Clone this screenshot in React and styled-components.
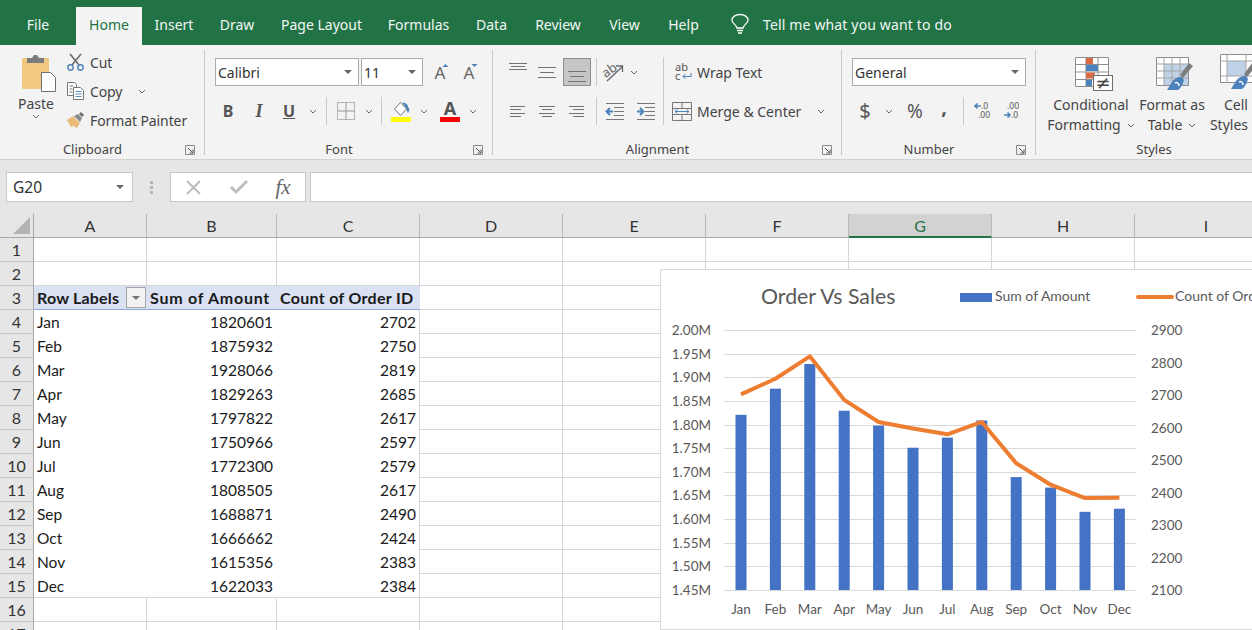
import * as React from 'react'
import styled, { createGlobalStyle } from 'styled-components'

const UI_FONT = '"Noto Sans", "Open Sans", sans-serif'
const CELL_FONT = 'Lato, "Open Sans", sans-serif'
const GREEN = '#217346'
const GRID = '#d6d6d6'

const GlobalStyle = createGlobalStyle`
    html, body {
        margin: 0;
        width: 1252px;
        height: 630px;
        overflow: hidden;
        background: #fff;
    }
    svg {
        overflow: visible;
    }
`

const Page = styled.div`
    width: 1252px;
    height: 630px;
    overflow: hidden;
    font-family: ${UI_FONT};
    color: #444;
`

/* tabs */
const TabBar = styled.div`
    display: flex;
    align-items: flex-end;
    height: 45px;
    background: ${GREEN};
`

const Tab = styled.div`
    width: ${p => p.$w}px;
    height: 38px;
    display: flex;
    align-items: center;
    justify-content: center;
    font-size: 14px;
    padding-bottom: 3px;
    box-sizing: border-box;
    color: ${p => (p.$active ? GREEN : '#f1f6f3')};
    background: ${p => (p.$active ? '#f3f3f3' : 'transparent')};
`

const TellMe = styled.div`
    display: flex;
    align-items: center;
    gap: 14px;
    height: 38px;
    padding: 0 0 3px 18px;
    box-sizing: border-box;
    font-size: 14px;
    letter-spacing: 0.15px;
    color: #f1f6f3;
    white-space: nowrap;
`

/* ribbon */
const Ribbon = styled.div`
    display: flex;
    height: 115px;
    box-sizing: border-box;
    padding-top: 5px;
    background: #f3f3f3;
    border-bottom: 1px solid #d2d2d2;
`

const Group = styled.section`
    flex: none;
    width: ${p => p.$w}px;
    height: 105px;
    box-sizing: border-box;
    display: flex;
    flex-direction: column;
    border-right: ${p => (p.$last ? 'none' : '1px solid #c8c8c8')};
`

const GroupBody = styled.div`
    flex: 1;
    min-height: 0;
    display: flex;
    padding-left: ${p => p.$pad || 0}px;
`

const GroupFoot = styled.div`
    display: flex;
    align-items: center;
    height: 17px;
    margin-bottom: -3px;
`

const GroupLabel = styled.div`
    flex: 1;
    text-align: center;
    font-size: 13px;
    line-height: 17px;
    color: #444;
`

const Launcher = styled.div`
    flex: none;
    width: 19px;
    display: flex;
    justify-content: flex-start;
`

const PasteBlock = styled.div`
    flex: none;
    width: 62px;
    margin-left: 5px;
    display: flex;
    flex-direction: column;
    align-items: center;
    padding-top: 4px;
    font-size: 14px;
    color: #444;
`

const PasteArt = styled.div`
    height: 38px;
    margin-left: 6px;
`

const PasteLabel = styled.div`
    line-height: 20px;
    margin-top: 2px;
`

const ClipList = styled.div`
    display: flex;
    flex-direction: column;
    gap: 5px;
`

const ClipRow = styled.div`
    display: flex;
    align-items: center;
    height: 24px;
    font-size: 14px;
    letter-spacing: -0.1px;
    white-space: nowrap;
`

const ClipIcon = styled.div`
    flex: none;
    width: 23px;
    display: flex;
    align-items: center;
`

const Rows = styled.div`
    display: flex;
    flex-direction: column;
    gap: 11px;
    padding-top: 8px;
`

const Row = styled.div`
    display: flex;
    align-items: center;
    height: 28px;
`

const Slot = styled.div`
    flex: none;
    width: ${p => p.$w}px;
    height: 100%;
    box-sizing: border-box;
    display: flex;
    align-items: center;
    justify-content: center;
`

const SelectedSlot = styled(Slot)`
    margin-left: 1px;
    background: #c6c6c6;
    border: 1px solid #8f8f8f;
`

const WideIcon = styled.div`
    flex: none;
    width: 33px;
    padding-right: 5px;
    box-sizing: border-box;
    display: flex;
    justify-content: flex-end;
`

const Glyph = styled.span`
    font-size: ${p => p.$size || 16}px;
    font-weight: ${p => (p.$bold ? 700 : 400)};
    font-style: ${p => (p.$italic ? 'italic' : 'normal')};
    text-decoration: ${p => (p.$under ? 'underline' : 'none')};
    font-family: ${p => (p.$serif ? '"Liberation Serif", serif' : UI_FONT)};
    color: ${p => p.$color || '#555'};
    line-height: 1;
    padding-bottom: ${p => p.$raise || 0}px;
`

const Divider = styled.div`
    flex: none;
    width: 1px;
    height: ${p => p.$h || 28}px;
    margin: 0 ${p => p.$mr || 0}px 0 ${p => p.$ml || 0}px;
    background: #c8c8c8;
`

const Combo = styled.div`
    flex: none;
    width: ${p => p.$w}px;
    height: 28px;
    box-sizing: border-box;
    margin-right: ${p => p.$mr || 0}px;
    padding: 0 6px 0 2px;
    display: flex;
    align-items: center;
    justify-content: space-between;
    background: #fff;
    border: 1px solid #ababab;
    font-size: 14px;
    color: #333;
`

const TallDivider = styled(Divider)`
    height: 68px;
    margin-top: 7px;
`

const WideRow = styled.div`
    display: flex;
    align-items: center;
    height: 28px;
    font-size: 14px;
    white-space: nowrap;
`

const RowText = styled.span`
    width: ${p => p.$w}px;
`

const StyleBtn = styled.div`
    flex: none;
    width: ${p => p.$w}px;
    display: flex;
    flex-direction: column;
    align-items: center;
    padding-top: ${p => p.$top || 7}px;
    font-size: 14px;
    white-space: nowrap;
`

const IconBox = styled.div`
    height: ${p => p.$h || 36}px;
    display: flex;
    justify-content: center;
    margin: 0 0 2px 5px;
`

const StyleLine = styled.div`
    display: flex;
    align-items: center;
    gap: 6px;
    line-height: 20px;
`

/* formula bar */
const FormulaBar = styled.div`
    display: flex;
    height: 54px;
    box-sizing: border-box;
    padding-top: 12px;
    background: #e6e6e6;
`

const NameBox = styled.div`
    flex: none;
    width: 127px;
    height: 30px;
    margin-left: 6px;
    box-sizing: border-box;
    padding: 0 8px 0 6px;
    display: flex;
    align-items: center;
    justify-content: space-between;
    background: #fff;
    border: 1px solid #c6c6c6;
    font-size: 15.5px;
    color: #333;
`

const Grip = styled.div`
    flex: none;
    width: 37px;
    height: 30px;
    display: flex;
    align-items: center;
    justify-content: center;
`

const FormulaButtons = styled.div`
    flex: none;
    width: 136px;
    height: 30px;
    box-sizing: border-box;
    display: flex;
    align-items: center;
    background: #fff;
    border: 1px solid #c6c6c6;
`

const FormulaInput = styled.div`
    flex: 1;
    height: 30px;
    margin-left: 4px;
    box-sizing: border-box;
    background: #fff;
    border: 1px solid #c6c6c6;
    border-right: none;
`

/* sheet */
const Sheet = styled.div`
    position: relative;
    display: grid;
    grid-template-columns: 34px 113px 130px 143px repeat(6, 143px);
    grid-auto-rows: 24px;
    font-family: ${CELL_FONT};
    font-size: 15.5px;
    color: #1a1a1a;
`

const Corner = styled.div`
    background: #e6e6e6;
    border-right: 1px solid #a8a8a8;
    border-bottom: 1px solid #a8a8a8;
    box-sizing: border-box;
    display: flex;
    align-items: flex-end;
    justify-content: flex-end;
    padding: 0 3px 3px 0;
`

const ColHead = styled.div`
    box-sizing: border-box;
    display: flex;
    align-items: center;
    justify-content: center;
    font-size: 16px;
    background: ${p => (p.$selected ? '#d2d2d2' : '#e6e6e6')};
    color: ${p => (p.$selected ? GREEN : '#333')};
    border-right: 1px solid #b8b8b8;
    border-bottom: ${p => (p.$selected ? `2px solid ${GREEN}` : '1px solid #a8a8a8')};
`

const RowHead = styled.div`
    box-sizing: border-box;
    display: flex;
    align-items: center;
    justify-content: center;
    font-size: 16px;
    background: #e6e6e6;
    color: #333;
    border-right: 1px solid #a8a8a8;
    border-bottom: 1px solid #c6c6c6;
`

const Cell = styled.div`
    box-sizing: border-box;
    display: flex;
    align-items: center;
    justify-content: ${p => (p.$right ? 'flex-end' : 'flex-start')};
    padding: 0 ${p => (p.$noRight ? 4 : 3)}px 0 3px;
    white-space: nowrap;
    min-width: 0;
    border-right: ${p => (p.$noRight ? 'none' : `1px solid ${GRID}`)};
    border-bottom: ${p => (p.$noBottom ? 'none' : `1px solid ${GRID}`)};
`

const PivotHead = styled.div`
    box-sizing: border-box;
    display: flex;
    align-items: center;
    justify-content: space-between;
    padding: 0 3px;
    font-size: 16px;
    font-weight: 700;
    letter-spacing: ${p => p.$track}px;
    white-space: nowrap;
    background: #d9e1f2;
    border-bottom: 1px solid #8ea9db;
`

const FilterBtn = styled.div`
    flex: none;
    width: 20px;
    height: 21px;
    box-sizing: border-box;
    margin-right: -2px;
    display: flex;
    align-items: center;
    justify-content: center;
    background: #f2f2f2;
    border: 1px solid #a6a6a6;
`

const ChartFrame = styled.div`
    position: absolute;
    left: 660px;
    top: 55px;
    width: 640px;
    height: 361px;
    box-sizing: border-box;
    background: #fff;
    border: 1px solid #d9d9d9;
    overflow: hidden;
`

const ChartSvg = styled.svg`
    display: block;
    font-family: ${CELL_FONT};
    fill: #595959;
`

/* small drawings */
const Chevron = ({ c = '#666' }) => (
    <svg width="8" height="5" viewBox="0 0 8 5"><path d="M1 1l3 3 3-3" fill="none" stroke={c} strokeWidth="1" /></svg>
)

const Caret = () => (
    <svg width="8" height="4" viewBox="0 0 8 4"><path d="M0 0h8L4 4z" fill="#666" /></svg>
)

const LauncherIcon = () => (
    <svg width="10" height="10" viewBox="0 0 10 10">
        <path d="M.5 9.500V.5h9v9z" fill="none" stroke="#8a8a8a" />
        <path d="M3 3l5 5M8 4.500V8H4.500" fill="none" stroke="#555" />
    </svg>
)

const PasteIcon = () => (
    <svg width="36" height="38" viewBox="0 0 36 38">
        <rect x="1" y="4" width="27" height="31" rx="1" fill="#f0c87f" />
        <path d="M6 9V4h5l2-3h3l2 3h5v5z" fill="#7b7b7b" />
        <path d="M20.500 18.500h9l5 5v14h-14z" fill="#fff" stroke="#6f6f6f" />
    </svg>
)

const ScissorsIcon = () => (
    <svg width="17" height="18" viewBox="0 0 17 18">
        <path d="M3 1l9 11M14 1L5 12" stroke="#6d6d6d" strokeWidth="1.600" fill="none" />
        <circle cx="3.500" cy="14.500" r="2.700" fill="none" stroke="#4d82b8" strokeWidth="1.400" />
        <circle cx="13.500" cy="14.500" r="2.700" fill="none" stroke="#4d82b8" strokeWidth="1.400" />
    </svg>
)

const CopyIcon = () => (
    <svg width="17" height="18" viewBox="0 0 17 18">
        <path d="M.5.5h7l2 2v11H.5z" fill="#fff" stroke="#777" />
        <path d="M6.500 5.500h7l3 3v9h-10z" fill="#fff" stroke="#777" />
        <path d="M2.500 4h4M2.500 7h3M2.500 10h3" stroke="#777" />
        <path d="M8.500 9.500h6M8.500 12h6M8.500 14.500h6" stroke="#5a8fc0" />
    </svg>
)

const BrushIcon = () => (
    <svg width="18" height="18" viewBox="0 0 18 18">
        <path d="M0 9l6-4 7 7-3 5-4-2-2 1z" fill="#e9bb78" />
        <path d="M7 5l4-2 4 4-2 4z" fill="#8a8a8a" />
        <path d="M12 3l2-2 3 3-2 2z" fill="#6d6d6d" />
    </svg>
)

const GrowFont = ({ shrink }) => (
    <svg width="18" height="17" viewBox="0 0 18 17">
        <text x="3.500" y="15" fontSize="17" fill="#666" fontFamily="Noto Sans, sans-serif">A</text>
        <path d={shrink ? 'M11.500 0h6l-3 3z' : 'M11.500 3h6l-3-3z'} fill="#4d82b8" />
    </svg>
)

const BordersIcon = () => (
    <svg width="18" height="18" viewBox="0 0 18 18">
        <path d="M.5.5h17v17H.5z" fill="none" stroke="#777" strokeDasharray="1 1" />
        <path d="M9 .5v17M.5 9h17" fill="none" stroke="#999" />
    </svg>
)

const FillIcon = () => (
    <svg width="20" height="21" viewBox="0 0 20 21">
        <path d="M3.500 8l6-6.500 6 6.500-6 6.500z" fill="#fff" stroke="#777" />
        <path d="M11 1.500c3 0 5.500 1.500 6 4l1.500 3.500-1.500 3-1.500-3V7.500z" fill="#4d82b8" />
        <rect y="16" width="20" height="5" fill="#ffff00" />
    </svg>
)

const FontColorIcon = () => (
    <svg width="20" height="21" viewBox="0 0 20 21">
        <text x="10" y="14" fontSize="18" fontWeight="700" textAnchor="middle" fill="#555" fontFamily="Noto Sans, sans-serif">A</text>
        <rect y="16" width="20" height="5" fill="#ff0000" />
    </svg>
)

const AlignLines = ({ lines, w = 18, h = 14 }) => (
    <svg width={w} height={h} viewBox={`0 0 ${w} ${h}`}>
        {lines.map(([x1, x2, y]) => (
            <path key={`${x1}-${y}`} d={`M${x1} ${y + 0.5}H${x2}`} stroke="#727272" />
        ))}
    </svg>
)

const OrientIcon = () => (
    <svg width="22" height="20" viewBox="0 0 22 20">
        <g transform="rotate(-35 8 10)">
            <text x="0" y="12" fontSize="13" fill="#666" fontFamily="Noto Sans, sans-serif">ab</text>
        </g>
        <path d="M4 19L19 5M13 4h6.500v6" fill="none" stroke="#666" strokeWidth="1.300" />
    </svg>
)

const IndentIcon = ({ flip }) => (
    <svg width="19" height="17" viewBox="0 0 19 17">
        <path d="M1 .5h18M9 4.500h10M9 8.500h10M9 12.500h10M1 16.500h18" stroke="#777" />
        {flip
            ? <path d="M1 8.500h5M4 5l3.500 3.500L4 12" fill="none" stroke="#4d82b8" strokeWidth="2" />
            : <path d="M8 8.500H2M5 5L1.500 8.500 5 12" fill="none" stroke="#4d82b8" strokeWidth="2" />}
    </svg>
)

const WrapIcon = () => (
    <svg width="17" height="18" viewBox="0 0 17 18">
        <text x="0" y="8" fontSize="11" fill="#555" fontFamily="Noto Sans, sans-serif">ab</text>
        <text x="0" y="17" fontSize="11" fill="#555" fontFamily="Noto Sans, sans-serif">c</text>
        <path d="M16 10v3.500H8M10.500 11L8 13.500l2.500 2.500" fill="none" stroke="#4d82b8" />
    </svg>
)

const MergeIcon = () => (
    <svg width="20" height="19" viewBox="0 0 20 19">
        <path d="M.5.5h19v18H.5zM.5 6.500h19M.5 12.500h19M10 .5v6M10 12.500v6" fill="none" stroke="#777" />
        <path d="M3 9.500h14M5.500 7.500L3 9.500l2.500 2M14.500 7.500L17 9.500l-2.500 2" fill="#fff" stroke="#4d82b8" />
    </svg>
)

const DecimalIcon = ({ more }) => (
    <svg width="18" height="18" viewBox="0 0 18 18" fontFamily="Noto Sans, sans-serif" fontSize="8.500" fill="#555">
        {more ? (
            <>
                <text x="8" y="7">.0</text>
                <text x="5" y="16">.00</text>
                <path d="M8 4H2M4.500 1.500L2 4l2.500 2.500" fill="none" stroke="#4d82b8" strokeWidth="1.600" />
            </>
        ) : (
            <>
                <text x="5" y="7">.00</text>
                <text x="9" y="16">.0</text>
                <path d="M2 13h6M5.500 10.500L8 13l-2.500 2.500" fill="none" stroke="#4d82b8" strokeWidth="1.600" />
            </>
        )}
    </svg>
)

const CondFormatIcon = () => (
    <svg width="38" height="36" viewBox="0 0 38 36">
        <path d="M.5.5h33v29H.5zM.5 7.500h33M.5 15h33M.5 22.500h33M11 .5v29M23 .5v29" fill="#fff" stroke="#8d8d8d" />
        <rect x="11" y="1" width="7" height="6" fill="#d96b45" />
        <rect x="11" y="8" width="12" height="6" fill="#4c83bd" />
        <rect x="11" y="15.500" width="9" height="6" fill="#d96b45" />
        <rect x="11" y="23" width="6" height="6" fill="#4c83bd" />
        <rect x="18.500" y="18.500" width="19" height="15" fill="#fff" stroke="#6d6d6d" />
        <text x="28" y="31.500" fontSize="18" textAnchor="middle" fill="#444" fontFamily="DejaVu Sans, sans-serif">≠</text>
    </svg>
)

const TableBrush = () => (
    <>
        <path d="M37 9l-4-3-9 12 3 3z" fill="#7d7d7d" />
        <path d="M26 20c-5 0-8 2-10 5l-5 8h11c3-2 5-6 6-10z" fill="#4c83bd" />
        <path d="M19 26c2-1 4 0 4 3" fill="none" stroke="#fff" strokeWidth="1.500" />
    </>
)

const TableStyleIcon = () => (
    <svg width="38" height="36" viewBox="0 0 38 36">
        <path d="M.5.5h32v28H.5z" fill="#fff" stroke="#8d8d8d" />
        <rect x="8" y="7" width="24" height="21" fill="#bfd2e8" />
        <path d="M.5 7h32M.5 14h32M.5 21h32M8 .5v28M16 .5v28M24 .5v28" stroke="#a5a5a5" fill="none" />
        <TableBrush />
    </svg>
)

const CellStyleIcon = () => (
    <svg width="38" height="38" viewBox="0 0 38 38">
        <path d="M.5.5h32v28H.5z" fill="#fff" stroke="#8d8d8d" />
        <rect x="7" y="7" width="19" height="15" fill="#bfd2e8" />
        <path d="M7 .5v28M26 .5v28M.5 7h32M.5 22h32" stroke="#a5a5a5" fill="none" />
        <g transform="translate(0 2)"><TableBrush /></g>
    </svg>
)

const CrossIcon = () => (
    <svg width="15" height="15" viewBox="0 0 15 15"><path d="M1 1l13 13M14 1L1 14" stroke="#bdbdbd" strokeWidth="2" /></svg>
)

const CheckIcon = () => (
    <svg width="18" height="14" viewBox="0 0 18 14"><path d="M1 7l5 5L17 1" fill="none" stroke="#bdbdbd" strokeWidth="3" /></svg>
)

const BulbIcon = () => (
    <svg width="18" height="21" viewBox="0 0 18 21">
        <path d="M6 14c0-3-5-4-5-8a8 5.500 0 0 1 16 0c0 4-5 5-5 8z" fill="none" stroke="#fff" strokeWidth="1.300" />
        <path d="M6 16.500h6M7 19h4" stroke="#fff" strokeWidth="1.300" />
    </svg>
)

const GripIcon = () => (
    <svg width="4" height="13" viewBox="0 0 4 13"><path d="M0 0h3v3H0zM0 5h3v3H0zM0 10h3v3H0z" fill="#b4b4b4" /></svg>
)

/* data */
const TABS = [
    ['File', 76], ['Home', 66, true], ['Insert', 64], ['Draw', 62], ['Page Layout', 107], ['Formulas', 87],
    ['Data', 59], ['Review', 74], ['View', 59], ['Help', 59],
]

const COLUMNS = ['A', 'B', 'C', 'D', 'E', 'F', 'G', 'H', 'I']

const ORDERS = [
    ['Jan', 1820601, 2702], ['Feb', 1875932, 2750], ['Mar', 1928066, 2819], ['Apr', 1829263, 2685],
    ['May', 1797822, 2617], ['Jun', 1750966, 2597], ['Jul', 1772300, 2579], ['Aug', 1808505, 2617],
    ['Sep', 1688871, 2490], ['Oct', 1666662, 2424], ['Nov', 1615356, 2383], ['Dec', 1622033, 2384],
]

const LEFT_TICKS = ['2.00M', '1.95M', '1.90M', '1.85M', '1.80M', '1.75M', '1.70M', '1.65M', '1.60M', '1.55M', '1.50M', '1.45M']
const RIGHT_TICKS = [2900, 2800, 2700, 2600, 2500, 2400, 2300, 2200, 2100]

const PLOT_TOP = 330
const PLOT_BOTTOM = 590
const barX = i => 741 + i * 34.4
const amountY = v => PLOT_BOTTOM - ((v - 1450000) / 550000) * (PLOT_BOTTOM - PLOT_TOP)
const countY = v => PLOT_BOTTOM - ((v - 2100) / 800) * (PLOT_BOTTOM - PLOT_TOP)

const Chart = () => (
    <ChartFrame>
        <ChartSvg width="638" height="359" viewBox="661 270 638 359">
            <text x="761" y="304" fontSize="21.3">Order Vs Sales</text>
            <rect x="960" y="293" width="32" height="9" fill="#4472c4" />
            <text x="995" y="301" fontSize="14">Sum of Amount</text>
            <path d="M1138 297h34" stroke="#ed7d31" strokeWidth="4" strokeLinecap="round" />
            <text x="1175" y="301" fontSize="14">Count of Order ID</text>

            {LEFT_TICKS.map((t, i) => {
                const y = PLOT_TOP + (i * (PLOT_BOTTOM - PLOT_TOP)) / 11
                return (
                    <g key={t}>
                        <path d={`M724 ${Math.round(y) + 0.5}H1136`} stroke="#d9d9d9" />
                        <text x="711" y={y + 5} fontSize="13.5" textAnchor="end">{t}</text>
                    </g>
                )
            })}
            {RIGHT_TICKS.map((t, i) => (
                <text key={t} x="1151" y={PLOT_TOP + i * 32.5 + 5} fontSize="13.500">{t}</text>
            ))}

            {ORDERS.map(([m, amount], i) => (
                <g key={m}>
                    <rect x={barX(i) - 5.5} y={amountY(amount)} width="11" height={PLOT_BOTTOM - amountY(amount)} fill="#4472c4" />
                    <text x={barX(i)} y="614" fontSize="13.5" textAnchor="middle">{m}</text>
                </g>
            ))}
            <polyline
                points={ORDERS.map(([, , c], i) => `${barX(i)},${countY(c)}`).join(' ')}
                fill="none"
                stroke="#ed7d31"
                strokeWidth="4"
                strokeLinejoin="round"
            />
        </ChartSvg>
    </ChartFrame>
)

const SheetRows = () => {
    const rows = []
    for (let r = 1; r <= 17; r++) {
        rows.push(<RowHead key={`h${r}`}>{r}</RowHead>)
        if (r === 3) {
            rows.push(
                <PivotHead key="p1" $track={0.2}>Row Labels<FilterBtn><svg width="8" height="4" viewBox="0 0 8 4"><path d="M0 0h8L4 4z" fill="#777" /></svg></FilterBtn></PivotHead>,
                <PivotHead key="p2" $track={0.75}>Sum of Amount</PivotHead>,
                <PivotHead key="p3" $track={0.3}>Count of Order ID</PivotHead>,
            )
        } else if (r >= 4 && r <= 15) {
            const [m, amount, count] = ORDERS[r - 4]
            const last = r === 15
            rows.push(
                <Cell key={`a${r}`} $noRight $noBottom={!last}>{m}</Cell>,
                <Cell key={`b${r}`} $right $noRight $noBottom={!last}>{amount}</Cell>,
                <Cell key={`c${r}`} $right $noBottom={!last}>{count}</Cell>,
            )
        } else {
            rows.push(<Cell key={`a${r}`} />, <Cell key={`b${r}`} />, <Cell key={`c${r}`} />)
        }
        for (let c = 3; c < COLUMNS.length; c++) {
            rows.push(<Cell key={`${COLUMNS[c]}${r}`} />)
        }
    }
    return rows
}

const App = () => {
    return (
        <Page>
            <GlobalStyle />
            <TabBar>
                {TABS.map(([name, w, active]) => (
                    <Tab key={name} $w={w} $active={active}>{name}</Tab>
                ))}
                <TellMe><BulbIcon />Tell me what you want to do</TellMe>
            </TabBar>

            <Ribbon>
                <Group $w={205}>
                    <GroupBody>
                        <PasteBlock>
                            <PasteArt><PasteIcon /></PasteArt>
                            <PasteLabel>Paste</PasteLabel>
                            <Chevron />
                        </PasteBlock>
                        <ClipList>
                            <ClipRow><ClipIcon><ScissorsIcon /></ClipIcon>Cut</ClipRow>
                            <ClipRow><ClipIcon><CopyIcon /></ClipIcon><RowText $w={48}>Copy</RowText><Chevron /></ClipRow>
                            <ClipRow><ClipIcon><BrushIcon /></ClipIcon>Format Painter</ClipRow>
                        </ClipList>
                    </GroupBody>
                    <GroupFoot><GroupLabel>Clipboard</GroupLabel><Launcher><LauncherIcon /></Launcher></GroupFoot>
                </Group>

                <Group $w={288}>
                    <GroupBody $pad={10}>
                        <Rows>
                            <Row>
                                <Combo $w={144} $mr={2}>Calibri<Caret /></Combo>
                                <Combo $w={62}>11<Caret /></Combo>
                                <Slot $w={33}><GrowFont /></Slot>
                                <Slot $w={25}><GrowFont shrink /></Slot>
                            </Row>
                            <Row>
                                <Slot $w={26}><Glyph $bold>B</Glyph></Slot>
                                <Slot $w={36}><Glyph $italic $bold $serif $size={18}>I</Glyph></Slot>
                                <Slot $w={24}><Glyph $bold $under>U</Glyph></Slot>
                                <Slot $w={24}><Chevron /></Slot>
                                <Divider $ml={1} $mr={2} />
                                <Slot $w={33}><BordersIcon /></Slot>
                                <Slot $w={14}><Chevron /></Slot>
                                <Divider $ml={5} $mr={6} />
                                <Slot $w={26}><FillIcon /></Slot>
                                <Slot $w={20}><Chevron /></Slot>
                                <Slot $w={32}><FontColorIcon /></Slot>
                                <Slot $w={14}><Chevron /></Slot>
                            </Row>
                        </Rows>
                    </GroupBody>
                    <GroupFoot><GroupLabel>Font</GroupLabel><Launcher><LauncherIcon /></Launcher></GroupFoot>
                </Group>

                <Group $w={349}>
                    <GroupBody $pad={10}>
                        <Rows>
                            <Row>
                                <Slot $w={29}><AlignLines lines={[[0, 18, 1], [2, 16, 4], [0, 18, 7]]} h={20} /></Slot>
                                <Slot $w={30}><AlignLines lines={[[0, 18, 2], [2, 16, 7], [0, 18, 12]]} /></Slot>
                                <SelectedSlot $w={28}><AlignLines lines={[[0, 18, 9], [2, 16, 14], [0, 18, 19]]} h={20} /></SelectedSlot>
                                <Slot $w={10}><Divider /></Slot>
                                <Slot $w={26}><OrientIcon /></Slot>
                                <Slot $w={14}><Chevron /></Slot>
                            </Row>
                            <Row>
                                <Slot $w={29}><AlignLines lines={[[0, 15, 1], [0, 11, 4], [0, 15, 8], [0, 11, 11]]} w={15} h={12} /></Slot>
                                <Slot $w={30}><AlignLines lines={[[0, 16, 1], [3, 13, 4], [0, 16, 8], [3, 13, 11]]} w={16} h={12} /></Slot>
                                <Slot $w={29}><AlignLines lines={[[0, 15, 1], [4, 15, 4], [0, 15, 8], [4, 15, 11]]} w={15} h={12} /></Slot>
                                <Slot $w={10}><Divider /></Slot>
                                <Slot $w={26}><IndentIcon /></Slot>
                                <Slot $w={36}><IndentIcon flip /></Slot>
                            </Row>
                        </Rows>
                        <TallDivider />
                        <Rows>
                            <WideRow><WideIcon><WrapIcon /></WideIcon>Wrap Text</WideRow>
                            <WideRow><WideIcon><MergeIcon /></WideIcon><RowText $w={120}>Merge &amp; Center</RowText><Chevron /></WideRow>
                        </Rows>
                    </GroupBody>
                    <GroupFoot><GroupLabel>Alignment</GroupLabel><Launcher><LauncherIcon /></Launcher></GroupFoot>
                </Group>

                <Group $w={194}>
                    <GroupBody $pad={10}>
                        <Rows>
                            <Row>
                                <Combo $w={174}>General<Caret /></Combo>
                            </Row>
                            <Row>
                                <Slot $w={26}><Glyph $size={20}>$</Glyph></Slot>
                                <Slot $w={22}><Chevron /></Slot>
                                <Slot $w={30}><Glyph $size={19}>%</Glyph></Slot>
                                <Slot $w={28}><Glyph $size={20} $bold $raise={9}>,</Glyph></Slot>
                                <Slot $w={10}><Divider /></Slot>
                                <Slot $w={28}><DecimalIcon more /></Slot>
                                <Slot $w={30}><DecimalIcon /></Slot>
                            </Row>
                        </Rows>
                    </GroupBody>
                    <GroupFoot><GroupLabel>Number</GroupLabel><Launcher><LauncherIcon /></Launcher></GroupFoot>
                </Group>

                <Group $w={236} $last>
                    <GroupBody $pad={10}>
                        <StyleBtn $w={90}>
                            <IconBox><CondFormatIcon /></IconBox>
                            <StyleLine>Conditional</StyleLine>
                            <StyleLine>Formatting<Chevron /></StyleLine>
                        </StyleBtn>
                        <StyleBtn $w={72}>
                            <IconBox><TableStyleIcon /></IconBox>
                            <StyleLine>Format as</StyleLine>
                            <StyleLine>Table<Chevron /></StyleLine>
                        </StyleBtn>
                        <StyleBtn $w={56} $top={4}>
                            <IconBox $h={39}><CellStyleIcon /></IconBox>
                            <StyleLine>Cell</StyleLine>
                            <StyleLine>Styles<Chevron /></StyleLine>
                        </StyleBtn>
                    </GroupBody>
                    <GroupFoot><GroupLabel>Styles</GroupLabel></GroupFoot>
                </Group>
            </Ribbon>

            <FormulaBar>
                <NameBox>G20<Caret /></NameBox>
                <Grip><GripIcon /></Grip>
                <FormulaButtons>
                    <Slot $w={45}><CrossIcon /></Slot>
                    <Slot $w={45}><CheckIcon /></Slot>
                    <Slot $w={44}><Glyph $serif $italic $size={21} $color="#666">fx</Glyph></Slot>
                </FormulaButtons>
                <FormulaInput />
            </FormulaBar>

            <Sheet>
                <Corner>
                    <svg width="17" height="17" viewBox="0 0 17 17"><path d="M17 0v17H0z" fill="#b4b4b4" /></svg>
                </Corner>
                {COLUMNS.map(c => (
                    <ColHead key={c} $selected={c === 'G'}>{c}</ColHead>
                ))}
                <SheetRows />
                <Chart />
            </Sheet>
        </Page>
    )
}

export default App
